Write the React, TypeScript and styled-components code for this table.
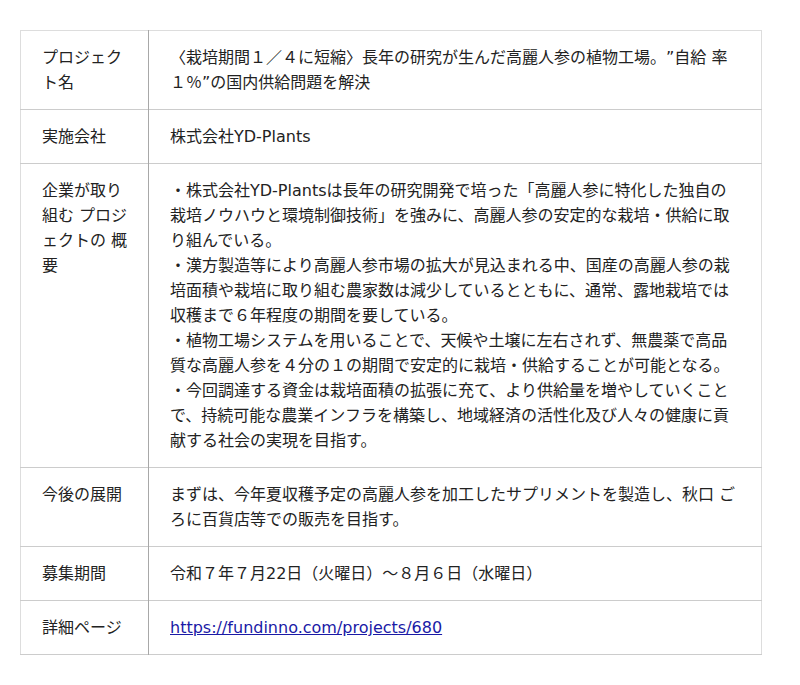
import styled, { createGlobalStyle } from "styled-components";

const GlobalStyle = createGlobalStyle`
  body {
    margin: 0;
    background: #ffffff;
    font-family: "DejaVu Sans", "Noto Sans CJK JP", sans-serif;
    color: #222222;
    text-spacing-trim: space-all;
  }
`;

const PageWrapper = styled.div`
  padding: 30px 38px 30px 20px;
`;

const InfoTable = styled.table`
  width: 742px;
  border-collapse: collapse;
  border: 1px solid #dddddd;
  font-size: 16px;
  line-height: 25px;
`;

const Row = styled.tr`
  border-bottom: 1px solid #cccccc;
`;

const Label = styled.th`
  width: 86px;
  padding: 14px 20px 14px 21px;
  text-align: left;
  font-weight: normal;
  vertical-align: top;
  border-right: 1px solid #a8a8a8;
`;

const Value = styled.td`
  padding: 14px 20px 14px 21px;
  vertical-align: top;
`;

const Link = styled.a`
  color: #1a1aa6;
  text-decoration: underline;
`;

const rows: { label: string; value: React.ReactNode }[] = [
  {
    label: "プロジェクト名",
    value:
      "〈栽培期間１／４に短縮〉長年の研究が生んだ高麗人参の植物工場。”自給 率１％”の国内供給問題を解決",
  },
  { label: "実施会社", value: "株式会社YD-Plants" },
  {
    label: "企業が取り組む プロジェクトの 概要",
    value: (
      <>
        ・株式会社YD-Plantsは長年の研究開発で培った「高麗人参に特化した独自の栽培ノウハウと環境制御技術」を強みに、高麗人参の安定的な栽培・供給に取り組んでいる。
        <br />
        ・漢方製造等により高麗人参市場の拡大が見込まれる中、国産の高麗人参の栽培面積や栽培に取り組む農家数は減少しているとともに、通常、露地栽培では収穫まで６年程度の期間を要している。
        <br />
        ・植物工場システムを用いることで、天候や土壌に左右されず、無農薬で高品質な高麗人参を４分の１の期間で安定的に栽培・供給することが可能となる。
        <br />
        ・今回調達する資金は栽培面積の拡張に充て、より供給量を増やしていくことで、持続可能な農業インフラを構築し、地域経済の活性化及び人々の健康に貢献する社会の実現を目指す。
      </>
    ),
  },
  {
    label: "今後の展開",
    value:
      "まずは、今年夏収穫予定の高麗人参を加工したサプリメントを製造し、秋口 ごろに百貨店等での販売を目指す。",
  },
  { label: "募集期間", value: "令和７年７月22日（火曜日）～８月６日（水曜日）" },
  {
    label: "詳細ページ",
    value: (
      <Link href="https://fundinno.com/projects/680">
        https://fundinno.com/projects/680
      </Link>
    ),
  },
];

const App = () => {
  return (
    <PageWrapper>
      <GlobalStyle />
      <InfoTable>
        <tbody>
          {rows.map((row) => (
            <Row key={row.label}>
              <Label>{row.label}</Label>
              <Value>{row.value}</Value>
            </Row>
          ))}
        </tbody>
      </InfoTable>
    </PageWrapper>
  );
};

export default App;
